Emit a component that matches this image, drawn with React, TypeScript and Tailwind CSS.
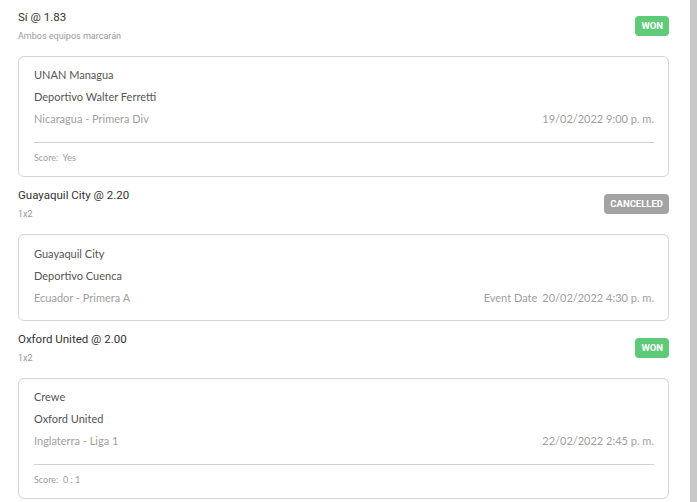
import React from "react";

type Bet = {
  pick: string;
  odds: string;
  market: string;
  status: "WON" | "CANCELLED";
  home: string;
  away: string;
  league: string;
  date: string;
  eventLabel?: string;
  score?: string;
};

const bets: Bet[] = [
  {
    pick: "Sí",
    odds: "1.83",
    market: "Ambos equipos marcarán",
    status: "WON",
    home: "UNAN Managua",
    away: "Deportivo Walter Ferretti",
    league: "Nicaragua - Primera Div",
    date: "19/02/2022 9:00 p. m.",
    score: "Yes",
  },
  {
    pick: "Guayaquil City",
    odds: "2.20",
    market: "1x2",
    status: "CANCELLED",
    home: "Guayaquil City",
    away: "Deportivo Cuenca",
    league: "Ecuador - Primera A",
    date: "20/02/2022 4:30 p. m.",
    eventLabel: "Event Date",
  },
  {
    pick: "Oxford United",
    odds: "2.00",
    market: "1x2",
    status: "WON",
    home: "Crewe",
    away: "Oxford United",
    league: "Inglaterra - Liga 1",
    date: "22/02/2022 2:45 p. m.",
    score: "0 : 1",
  },
];

function Badge({ status }: { status: Bet["status"] }) {
  return (
    <span
      className={
        status === "WON"
          ? "rounded-[4px] bg-[#5fcb79] px-[6px] font-['Roboto',sans-serif] text-[9.5px] font-bold leading-[20px] text-white"
          : "rounded-[4px] bg-[#a3a3a3] px-[6px] font-['Roboto',sans-serif] text-[9.5px] font-bold leading-[20px] text-white"
      }
    >
      {status}
    </span>
  );
}

function BetBlock({ bet }: { bet: Bet }) {
  return (
    <div className="pt-[9px]">
      <div className="flex items-center justify-between">
        <div className="font-['Roboto',sans-serif]">
          <div className="text-[11.5px] leading-4 text-[#333]">
            {bet.pick} @ {bet.odds}
          </div>
          <div className="mt-[4px] text-[9px] leading-[14px] text-[#999]">{bet.market}</div>
        </div>
        <Badge status={bet.status} />
      </div>
      <div
        className={
          bet.score
            ? "mt-[13px] rounded-[6px] border border-[#d4d4d4] pb-[10px] pl-[15px] pr-[14px] pt-[7px] font-['Lato',sans-serif] text-[11px]"
            : "mt-[13px] rounded-[6px] border border-[#d4d4d4] pb-[11px] pl-[15px] pr-[14px] pt-[8px] font-['Lato',sans-serif] text-[11px]"
        }
      >
        <div className="leading-[22px] text-[#555]">{bet.home}</div>
        <div className="leading-[22px] text-[#555]">{bet.away}</div>
        <div className="flex justify-between leading-[22px] text-[#a0a0a0]">
          <span>{bet.league}</span>
          <span>
            {bet.eventLabel && <span className="mr-[5px]">{bet.eventLabel}</span>}
            {bet.date}
          </span>
        </div>
        {bet.score && (
          <>
            <div className="mt-[12px] h-px bg-[#cfcfcf]" />
            <div className="mt-[7px] text-[9px] leading-4 text-[#a0a0a0]">
              Score:&nbsp; {bet.score}
            </div>
          </>
        )}
      </div>
    </div>
  );
}

export default function App() {
  return (
    <div className="flex h-[502px] w-[697px] overflow-hidden bg-white">
      <div className="flex-1 pl-[18px] pr-[21px]">
        {bets.map((b, i) => (
          <div key={i} className={i > 0 ? "mt-px" : ""}>
            <BetBlock bet={b} />
          </div>
        ))}
      </div>
      <div className="h-full w-[7px] bg-[#c8c8c8]" />
    </div>
  );
}
